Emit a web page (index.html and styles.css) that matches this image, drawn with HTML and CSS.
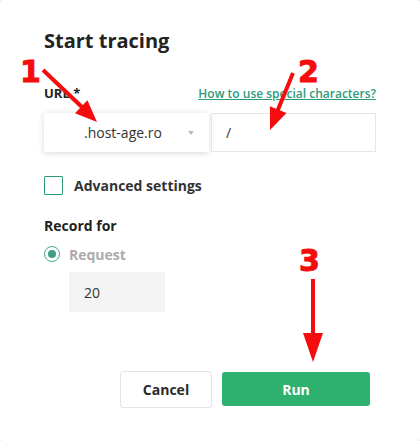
FILE: index.html
```html
<!DOCTYPE html>
<html>
<head>
<meta charset="utf-8">
<link rel="stylesheet" href="styles.css">
</head>
<body>
<div class="dialog">
  <h1 class="title">Start tracing</h1>
  <div class="url-head">
    <span class="label">URL *</span>
    <a class="help" href="#">How to use special characters?</a>
  </div>
  <div class="url-row">
    <div class="select"><span>.host-age.ro</span><span class="caret"></span></div>
    <div class="path">/</div>
  </div>
  <label class="check-row"><span class="checkbox"></span><span class="check-label">Advanced settings</span></label>
  <div class="section-label">Record for</div>
  <div class="radio-row"><span class="radio"><span class="dot"></span></span><span class="radio-label">Request</span></div>
  <div class="count">20</div>
  <div class="footer">
    <button class="btn cancel">Cancel</button>
    <button class="btn run">Run</button>
  </div>
</div>
<svg class="annot" width="420" height="441" viewBox="0 0 420 441">
  <text x="20" y="82" class="num">1</text>
  <line x1="43" y1="70" x2="84" y2="109" class="ln"/>
  <polygon points="97,122 75,113.3 87.4,100.3" class="hd"/>
  <text x="298" y="82" class="num">2</text>
  <line x1="293" y1="73" x2="277" y2="112" class="ln"/>
  <polygon points="270,130 286.5,113 269.9,106.2" class="hd"/>
  <text x="299" y="271" class="num">3</text>
  <line x1="313" y1="279" x2="313" y2="336" class="ln"/>
  <polygon points="313,362 303,333 323,333" class="hd"/>
</svg>
</body>
</html>
```
FILE: styles.css
```css
html, body { margin: 0; padding: 0; background: #e9e9e9; }
body { width: 420px; height: 441px; position: relative; overflow: hidden; }
.dialog {
  box-sizing: border-box;
  width: 420px; height: 441px;
  background: #fff;
  border-radius: 3px;
  padding: 27px 44px 0 44px;
  font-family: "Open Sans", sans-serif;
  color: #262626;
  display: flex; flex-direction: column;
}
.title { margin: 0; font-size: 20px; font-weight: 700; line-height: 27px; color: #222; }
.url-head { margin-top: 30px; display: flex; justify-content: space-between; align-items: baseline; line-height: 18px; }
.label { font-size: 13px; font-weight: 700; color: #222; }
.help { font-size: 12px; font-weight: 600; color: #2e9a7c; text-decoration: underline; }
.url-row { margin-top: 10px; display: flex; gap: 2px; height: 39px; }
.select {
  width: 165px; box-sizing: border-box; height: 39px;
  box-shadow: 0 1px 6px rgba(0,0,0,0.16);
  display: flex; align-items: center; padding-left: 40px; padding-right: 15px;
  font-size: 14px; color: #333; justify-content: space-between;
}
.caret { width: 0; height: 0; border-left: 3px solid transparent; border-right: 3px solid transparent; border-top: 4px solid #bbb; }
.path {
  flex: 1; box-sizing: border-box; height: 39px; border: 1px solid #e6e6e6;
  display: flex; align-items: center; padding-left: 14px; font-size: 14px; color: #333;
}
.check-row { margin-top: 24px; display: flex; align-items: center; gap: 11px; height: 19px; }
.checkbox { width: 19px; height: 19px; box-sizing: border-box; border: 1.5px solid #2e9a7c; border-radius: 1px; }
.check-label { font-size: 14px; font-weight: 700; color: #333; }
.section-label { margin-top: 21px; font-size: 14px; font-weight: 700; line-height: 19px; color: #222; }
.radio-row { margin-top: 11px; display: flex; align-items: center; gap: 9px; height: 16px; }
.radio { width: 16px; height: 16px; box-sizing: border-box; border: 1.5px solid #48a88a; border-radius: 50%; display: flex; align-items: center; justify-content: center; }
.dot { width: 8px; height: 8px; border-radius: 50%; background: #3f9e84; }
.radio-label { font-size: 14px; font-weight: 700; color: #ababab; }
.count { margin-top: 10px; margin-left: 25px; width: 96px; height: 40px; box-sizing: border-box; background: #f4f4f4; display: flex; align-items: center; padding-left: 15px; font-size: 14px; color: #333; }
.footer { margin-top: 59px; display: flex; justify-content: flex-end; gap: 10px; padding-right: 6px; align-items: flex-start; }
.btn { font-family: "Open Sans", sans-serif; font-size: 14px; font-weight: 700; border-radius: 3px; cursor: pointer; }
.cancel { width: 92px; height: 37px; background: #fff; border: 1px solid #e4e4e4; color: #2a2a2a; }
.run { width: 148px; height: 34px; margin-top: 1px; background: #2eb06f; border: none; color: #fff; }
.annot { position: absolute; left: 0; top: 0; }
.num { font-family: "DejaVu Sans", sans-serif; font-weight: 700; font-size: 30px; fill: #f50d0d; stroke: #f50d0d; stroke-width: 1px; }
.ln { stroke: #f50d0d; stroke-width: 4; }
.hd { fill: #f50d0d; }
```
